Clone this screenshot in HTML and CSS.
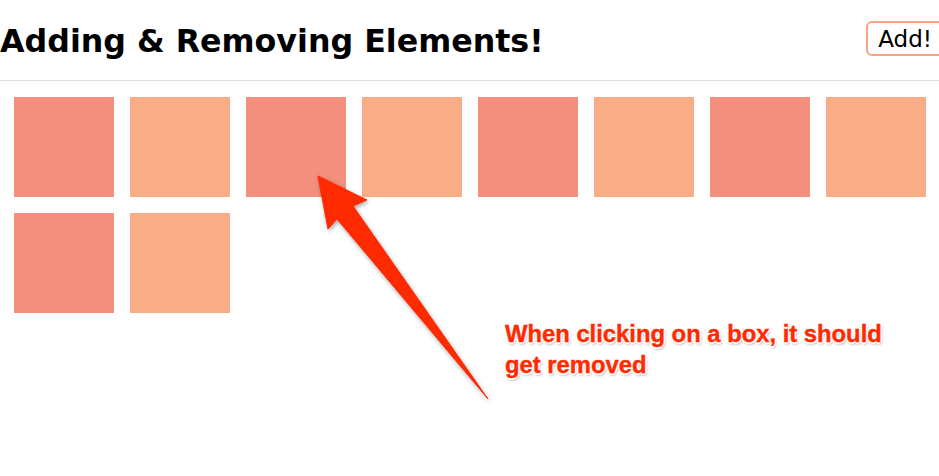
FILE: index.html
```html
<!DOCTYPE html>
<html lang="en">
<head>
<meta charset="utf-8">
<title>Adding &amp; Removing Elements!</title>
<link rel="stylesheet" href="styles.css">
</head>
<body>
<header class="topbar">
  <h1 class="title">Adding &amp; Removing Elements!</h1>
  <button class="add-btn">Add!</button>
</header>
<main class="boxes">
  <div class="box box-a"></div>
  <div class="box box-b"></div>
  <div class="box box-a"></div>
  <div class="box box-b"></div>
  <div class="box box-a"></div>
  <div class="box box-b"></div>
  <div class="box box-a"></div>
  <div class="box box-b"></div>
  <div class="box box-a"></div>
  <div class="box box-b"></div>
</main>
<svg class="arrow" width="939" height="476" viewBox="0 0 939 476" aria-hidden="true">
  <polygon points="318,176 367,200 353,206 488,399 337,219 328,229" />
</svg>
<p class="note">When clicking on a box, it should<br>get removed</p>
</body>
</html>
```
FILE: styles.css
```css
html, body {
  margin: 0;
  padding: 0;
  background: #fff;
  overflow: hidden;
}

body {
  position: relative;
  width: 939px;
  height: 476px;
}

.topbar {
  display: flex;
  align-items: center;
  justify-content: space-between;
  height: 80px;
  border-bottom: 1px solid #dddddd;
}

.title {
  margin: 0;
  font-family: "DejaVu Sans", Verdana, sans-serif;
  font-weight: bold;
  font-size: 31.7px;
  color: #000;
  padding-top: 2px;
}

.add-btn {
  height: 35px;
  margin-right: -5px;
  margin-bottom: 3px;
  padding: 0 10px;
  border: 2px solid #f9a47e;
  border-radius: 6px;
  background: #fff;
  font-family: "DejaVu Sans", Verdana, sans-serif;
  font-size: 23px;
  color: #000;
}

.boxes {
  display: flex;
  flex-wrap: wrap;
  gap: 16px;
  padding: 16px 0 0 14px;
  width: 912px;
}

.box {
  width: 100px;
  height: 100px;
}

.box-a { background: #f48e7d; }
.box-b { background: #f9ad87; }

.arrow {
  position: absolute;
  left: 0;
  top: 0;
  pointer-events: none;
  filter: drop-shadow(1px 2px 2px rgba(0, 0, 0, 0.35));
}

.arrow polygon {
  fill: #ff2a00;
  stroke: #ff2a00;
  stroke-width: 1;
  stroke-linejoin: round;
}

.note {
  position: absolute;
  left: 505px;
  top: 318px;
  margin: 0;
  font-family: "Liberation Sans", Arial, sans-serif;
  font-weight: bold;
  font-size: 23.8px;
  line-height: 31px;
  color: #ff2a00;
  -webkit-text-stroke: 0.4px #ff2a00;
  text-shadow:
    1.5px 0 0 #fff, -1.5px 0 0 #fff, 0 1.5px 0 #fff, 0 -1.5px 0 #fff,
    1px 1px 0 #fff, -1px -1px 0 #fff, 1px -1px 0 #fff, -1px 1px 0 #fff,
    1px 2px 3px rgba(0, 0, 0, 0.45);
}
```
